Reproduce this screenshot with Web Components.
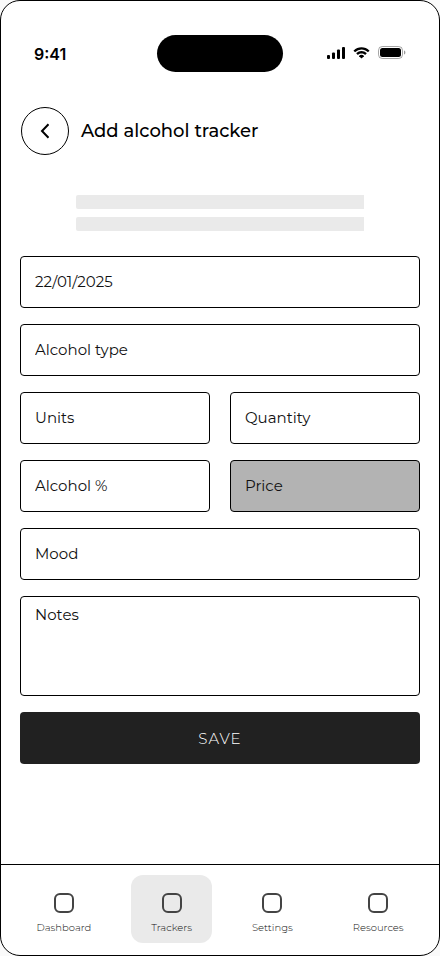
<!DOCTYPE html>
<html lang="en">
<head>
<meta charset="utf-8">
<meta name="viewport" content="width=device-width, initial-scale=1">
<title>Add alcohol tracker</title>
<style>
  body {
    margin: 0;
    background: #fafafa;
    color: #000;
    font-family: Montserrat, Inter, "Liberation Sans", sans-serif;
  }
</style>
</head>
<body>
<phone-screen>
  <status-bar slot="top" time="9:41"></status-bar>
  <page-header slot="top">Add alcohol tracker</page-header>
  <intro-skeleton></intro-skeleton>
  <tracker-form></tracker-form>
  <tab-bar slot="bottom">
    <tab-item>Dashboard</tab-item>
    <tab-item current>Trackers</tab-item>
    <tab-item>Settings</tab-item>
    <tab-item>Resources</tab-item>
  </tab-bar>
</phone-screen>

<script>
  class BaseElement extends HTMLElement {
    connectedCallback() {
      if (this.shadowRoot) return;
      this.attachShadow({ mode: "open" }).innerHTML =
        "<style>*{box-sizing:border-box}" + this.css() + "</style>" + this.html();
    }
  }

  customElements.define("phone-screen", class extends BaseElement {
    css() { return `
      :host { display: flex; flex-direction: column; box-sizing: border-box; min-height: 100vh;
        border: 1px solid #000; border-radius: 20px; background: #fff; overflow: hidden; }
      main { flex: 1; padding: 0 19px 24px; }
    `; }
    html() { return `<slot name="top"></slot><main><slot></slot></main><slot name="bottom"></slot>`; }
  });

  customElements.define("status-bar", class extends BaseElement {
    css() { return `
      :host { display: grid; grid-template-columns: 1fr auto 1fr; align-items: center;
        padding: 34px 33px 0; }
      time { font: 600 16px/20px Inter, "Liberation Sans", sans-serif; }
      .island { width: 126px; height: 37px; border-radius: 19px; background: #000; }
      .icons { display: flex; align-items: center; justify-content: flex-end; gap: 8px; padding-bottom: 2px; }
      svg { display: block; }
    `; }
    html() { return `
      <time>${this.getAttribute("time")}</time>
      <div class="island"></div>
      <div class="icons">
        <svg width="18" height="12" viewBox="0 0 18 12" aria-hidden="true">
          <rect x="0" y="8" width="3" height="4" rx="1"/>
          <rect x="5" y="5.5" width="3" height="6.5" rx="1"/>
          <rect x="10" y="2.5" width="3" height="9.5" rx="1"/>
          <rect x="15" y="0" width="3" height="12" rx="1"/>
        </svg>
        <svg width="17" height="12" viewBox="0 0 17 12" aria-hidden="true">
          <path d="M8.5 2.6c2.3 0 4.5.9 6.2 2.5.1.1.3.1.4 0l1.2-1.2c.2-.2.2-.4 0-.5A11.300 11.300 0 0 0 .7 3.400c-.2.1-.2.3 0 .5l1.200 1.200c.1.1.3.1.4 0A9 9 0 0 1 8.500 2.600z"/>
          <path d="M8.500 6.500c1.300 0 2.500.5 3.400 1.300.2.1.3.1.5 0l1.200-1.200c.1-.1.1-.3 0-.5a7.500 7.500 0 0 0-10.200 0c-.1.2-.1.4 0 .5l1.200 1.200c.2.1.3.1.5 0 .9-.8 2.100-1.300 3.400-1.300z"/>
          <path d="M10.900 9.200c.1-.1.1-.3 0-.5a3.700 3.700 0 0 0-4.800 0c-.1.2-.1.4 0 .5l2.100 2.100c.2.1.4.1.6 0z"/>
        </svg>
        <svg width="28" height="13" viewBox="0 0 28 13" aria-hidden="true">
          <rect x="0.500" y="0.500" width="24" height="12" rx="3.800" fill="none" stroke="#000" stroke-opacity=".35"/>
          <path d="M26 4.500v4c.9-.3 1.400-1.100 1.400-2S26.900 4.800 26 4.500z" opacity=".4"/>
          <rect x="2" y="2" width="21" height="9" rx="2.500"/>
        </svg>
      </div>`; }
  });

  customElements.define("page-header", class extends BaseElement {
    css() { return `
      :host { display: flex; align-items: center; gap: 12px; padding: 35px 20px 0; }
      button { display: grid; place-items: center; flex: none; width: 48px; height: 48px; padding: 0;
        border: 1px solid #000; border-radius: 50%; background: #fff; cursor: pointer; }
      h1 { margin: 0; font-size: 18px; line-height: 24px; font-weight: 500; }
    `; }
    html() { return `
      <button type="button" aria-label="Back">
        <svg width="24" height="24" viewBox="0 0 24 24" fill="none" stroke="#000" stroke-width="2" aria-hidden="true">
          <path d="M15.500 5.300 9 12l6.500 6.700"/>
        </svg>
      </button>
      <h1><slot></slot></h1>`; }
  });

  customElements.define("intro-skeleton", class extends BaseElement {
    css() { return `
      :host { display: grid; gap: 8px; width: 72%; margin: 40px auto 25px; }
      div { height: 14px; border-radius: 2px 0 0 2px; background: #eaeaea; }
    `; }
    html() { return `<div></div><div></div>`; }
  });

  customElements.define("form-field", class extends BaseElement {
    css() { return `
      :host { display: block; }
      input, textarea { display: block; width: 100%; height: 52px; margin: 0; padding: 0 14px 2px;
        border: 1px solid #000; border-radius: 4px; background: #fff; color: #111;
        font-family: inherit; font-size: 15px; line-height: 20px; font-weight: 400; outline: 0; }
      textarea { height: 100px; padding-top: 8px; resize: none; }
      input:disabled { background: #b3b3b3; opacity: 1; }
      ::placeholder { color: #111; opacity: 1; }
    `; }
    html() {
      const label = this.getAttribute("label");
      if (this.hasAttribute("multiline"))
        return `<textarea aria-label="${label}" placeholder="${label}"></textarea>`;
      return `<input type="text" aria-label="${label}" placeholder="${label}"
        value="${this.getAttribute("value") || ""}" ${this.hasAttribute("disabled") ? "disabled" : ""}>`;
    }
  });

  customElements.define("tracker-form", class extends BaseElement {
    css() { return `
      :host { display: block; }
      form { display: grid; grid-template-columns: 1fr 1fr; gap: 16px 20px; }
      .wide { grid-column: 1 / -1; }
      button { height: 52px; padding: 2px 0 0; border: 0; border-radius: 4px; background: #212121; color: #fff;
        font-family: inherit; font-size: 15px; line-height: 20px; font-weight: 300;
        letter-spacing: 1px; cursor: pointer; }
    `; }
    html() { return `
      <form>
        <form-field class="wide" label="Date" value="22/01/2025"></form-field>
        <form-field class="wide" label="Alcohol type"></form-field>
        <form-field label="Units"></form-field>
        <form-field label="Quantity"></form-field>
        <form-field label="Alcohol %"></form-field>
        <form-field label="Price" disabled></form-field>
        <form-field class="wide" label="Mood"></form-field>
        <form-field class="wide" label="Notes" multiline></form-field>
        <button class="wide" type="button">SAVE</button>
      </form>`; }
  });

  customElements.define("tab-bar", class extends BaseElement {
    css() { return `
      :host { display: block; border-top: 1px solid #000; }
      nav { display: flex; justify-content: center; gap: 20px; padding: 10px 0 12px; }
    `; }
    html() { return `<nav aria-label="Main"><slot></slot></nav>`; }
  });

  customElements.define("tab-item", class extends BaseElement {
    css() { return `
      :host { display: block; }
      a { display: flex; flex-direction: column; align-items: center; gap: 7px; height: 68px;
        padding: 18px 20px 0; border-radius: 12px; color: #111; text-decoration: none;
        font-size: 10px; line-height: 16px; font-weight: 300; }
      a[aria-current] { background: #eaeaea; }
      i { width: 20px; height: 20px; border: 2px solid #444; border-radius: 6px; }
    `; }
    html() { return `<a href="#" ${this.hasAttribute("current") ? 'aria-current="page"' : ""}><i></i><slot></slot></a>`; }
  });
</script>
</body>
</html>
